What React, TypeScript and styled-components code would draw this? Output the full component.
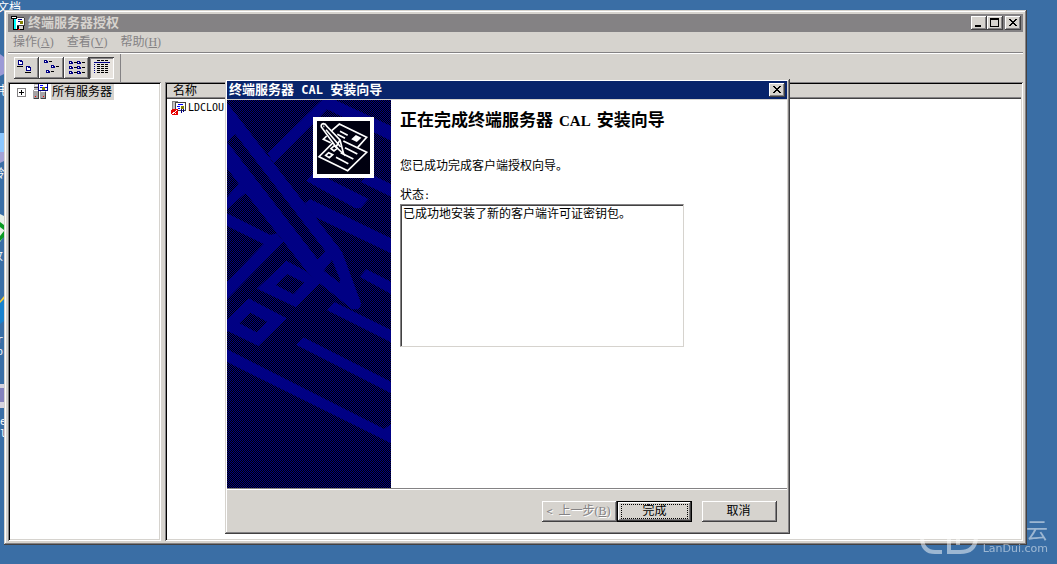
import React from "react";
import styled, { createGlobalStyle, css } from "styled-components";

const face = "#d6d3ce";
const grey = "#848284";
const dark = "#424142";
const navy = "#000084";
const cjk = '"DejaVu Sans Mono", "Noto Sans CJK SC", sans-serif';

const Global = createGlobalStyle`
  * { box-sizing: border-box; }
  body {
    margin: 0;
    background: #3a6ea5;
    color: #000;
    font-family: ${cjk};
    font-size: 12px;
    line-height: 16px;
  }
  button, textarea { font: inherit; color: inherit; }
`;

const raised = css`
  box-shadow: inset -1px -1px ${dark}, inset 1px 1px #fff, inset -2px -2px ${grey};
`;
const frame = css`
  box-shadow: inset -1px -1px ${dark}, inset 1px 1px ${face}, inset -2px -2px ${grey}, inset 2px 2px #fff;
`;

const Desktop = styled.div`
  position: relative;
  display: flex;
  min-height: 100vh;
  padding: 10px 30px 19px 4px;
  overflow: hidden;
`;

const DesktopLabel = styled.span<{ $x: number; $y: number }>`
  position: absolute;
  left: ${(p) => p.$x}px;
  top: ${(p) => p.$y}px;
  color: #fff;
  white-space: nowrap;
`;

const DesktopArt = styled.svg`
  position: absolute;
  left: 0;
  top: 0;
`;

const Latin = styled.span<{ $size?: number }>`
  font-size: ${(p) => p.$size ?? 10}px;
`;

const Key = styled.span`
  font-family: "Liberation Serif", serif;
  font-size: 12px;
`;

const HeadingLatin = styled.span`
  margin: 0 6px;
  font-family: "Liberation Serif", serif;
  font-size: 15px;
`;

const MainWindow = styled.main`
  position: relative;
  flex: 1;
  min-width: 0;
  display: flex;
  flex-direction: column;
  padding: 4px;
  background: ${face};
  ${frame}
`;

const TitleBar = styled.header<{ $active?: boolean }>`
  display: flex;
  align-items: center;
  height: 18px;
  padding: 0 2px;
  background: ${(p) => (p.$active ? "#08246b" : grey)};
  color: ${(p) => (p.$active ? "#fff" : face)};
`;

const Title = styled.h1`
  flex: 1;
  margin: 0;
  font-size: 13px;
  font-weight: 700;
  line-height: 18px;
  white-space: nowrap;
`;

const CaptionButton = styled.button<{ $apart?: boolean }>`
  width: 16px;
  height: 14px;
  margin-left: ${(p) => (p.$apart ? 2 : 0)}px;
  padding: 0;
  border: 0;
  background: ${face};
  ${raised}
  svg { display: block; }
`;

const MenuBar = styled.nav`
  display: flex;
  gap: 13px;
  height: 21px;
  padding: 2px 5px;
  border-bottom: 1px solid ${grey};
`;

const MenuItem = styled.button`
  padding: 0;
  border: 0;
  background: none;
  color: ${grey};
  line-height: 16px;
  white-space: nowrap;
`;

const ToolBar = styled.div`
  display: flex;
  height: 29px;
  border-top: 1px solid #fff;
`;

const ToolGroup = styled.div`
  display: flex;
  padding: 3px 6px;
  border-right: 1px solid ${grey};
`;

const ToolButton = styled.button<{ $pressed?: boolean }>`
  width: 25px;
  height: 22px;
  padding: 0;
  border: 0;
  background: ${(p) => (p.$pressed ? "#e7e3de" : face)};
  ${(p) =>
    p.$pressed
      ? css`box-shadow: inset 1px 1px ${dark}, inset -1px -1px #fff, inset 2px 2px ${grey};`
      : raised}
  svg { display: block; }
`;

const Panes = styled.div`
  flex: 1;
  display: grid;
  grid-template-columns: 153px minmax(0, 1fr);
  gap: 4px;
`;

const Pane = styled.section`
  padding: 2px;
  background: #fff;
  overflow: hidden;
  box-shadow: inset 1px 1px ${grey}, inset -1px -1px #fff, inset 2px 2px #000, inset -2px -2px ${face};
`;

const TreeItem = styled.div`
  display: flex;
  align-items: center;
  height: 16px;
  padding-left: 7px;
`;

const TreeIcon = styled.svg`
  margin: 0 3px 0 6px;
`;

const TreeLabel = styled.span`
  padding: 0 2px 0 1px;
  background: ${face};
`;

const ServerTable = styled.table`
  width: 100%;
  border-spacing: 0;
  th {
    height: 15px;
    padding: 0 6px;
    background: ${face};
    box-shadow: inset 0 -1px ${dark}, inset 0 -2px ${grey};
    font-weight: 400;
    line-height: 15px;
    text-align: left;
  }
  td { padding: 1px 4px; }
`;

const ServerName = styled.div`
  display: flex;
  align-items: center;
  gap: 1px;
`;

const Dialog = styled.div`
  position: absolute;
  left: 221px;
  top: 69px;
  width: 565px;
  padding: 2px 3px 2px 2px;
  background: ${face};
  ${frame}
`;

const DialogBody = styled.div`
  display: grid;
  grid-template-columns: 164px minmax(0, 1fr);
  margin-top: 1px;
  background: #fff;
  border-bottom: 1px solid ${grey};
`;

const SideArt = styled.svg`
  display: block;
`;

const DialogContent = styled.div`
  display: flex;
  flex-direction: column;
  align-items: flex-start;
  padding: 10px 9px;
`;

const Heading = styled.h2`
  margin: 0;
  font-size: 17px;
  font-weight: 700;
  line-height: 20px;
  white-space: nowrap;
`;

const Message = styled.p`
  margin: 27px 0 13px;
`;

const StatusBox = styled.textarea`
  width: 284px;
  height: 143px;
  padding: 1px 2px;
  border: 1px solid;
  border-color: ${grey} ${face} ${face} ${grey};
  background: #fff;
  box-shadow: inset 1px 1px ${dark};
  resize: none;
  outline: none;
`;

const Footer = styled.footer`
  display: flex;
  justify-content: flex-end;
  padding: 11px 10px 10px;
  border-top: 1px solid #fff;
`;

const PushButton = styled.button<{ $focus?: boolean; $apart?: boolean }>`
  width: 75px;
  height: 21px;
  margin-left: ${(p) => (p.$apart ? 10 : 0)}px;
  padding: 0 2px 0 0;
  border: ${(p) => (p.$focus ? "1px solid #000" : "0")};
  background: ${face};
  line-height: 19px;
  white-space: nowrap;
  ${raised}
  &:disabled { color: ${grey}; text-shadow: 1px 1px #fff; }
`;

const FocusRing = styled.span`
  display: block;
  margin: 0 1px 0 3px;
  border: 1px dotted #000;
  line-height: 13px;
`;

const Watermark = styled.div`
  position: absolute;
  right: 9px;
  bottom: 9px;
  display: flex;
  align-items: flex-end;
  gap: 5px;
  color: #fff;
  opacity: 0.5;
`;

const WatermarkText = styled.div`
  display: flex;
  flex-direction: column;
  align-items: flex-end;
  font-family: "DejaVu Sans", "Noto Sans CJK SC", sans-serif;
  font-size: 11px;
  line-height: 13px;
`;

const WatermarkName = styled.span`
  font-size: 22px;
  line-height: 22px;
`;

const CloseGlyph = () => (
  <svg width="16" height="14" shapeRendering="crispEdges">
    <path
      d="M4 3h2v1h1v1h2v-1h1v-1h2v1h-1v1h-1v1h-1v1h1v1h1v1h1v1h-2v-1h-1v-1h-2v1h-1v1h-2v-1h1v-1h1v-1h1v-1h-1v-1h-1v-1h-1z"
      fill="#000"
    />
  </svg>
);

const Page = ({ x, y }: { x: number; y: number }) => (
  <g>
    <path d={`M${x} ${y}h4v1h1v4h-5z`} fill={navy} />
    <path d={`M${x + 1} ${y + 1}h1v1h2v2h-3z`} fill="#fff" />
  </g>
);

const SmallIcon = ({ x, y }: { x: number; y: number }) => (
  <g>
    <path d={`M${x} ${y}h3v1h1v2h-4z`} fill={navy} />
    <path d={`M${x + 1} ${y + 1}h1v1h-1z`} fill="#fff" />
    <path d={`M${x + 5} ${y + 1}h3v1h-3z`} fill="#000" />
  </g>
);

const ServerIcon = () => (
  <TreeIcon width="16" height="16" shapeRendering="crispEdges">
    <path d="M2 0h5v6H2z" fill="#c6c3c6" />
    <path d="M1 6l1-1h4l1 1v9H1zM8 7l1-1h4l1 1v8H8z" fill="#a5a2a5" />
    <path d="M2 6h4v1H2zM9 7h4v1H9zM3 1h3v1H3z" fill="#fff" />
    <path d="M6 7h1v8H2v-1h4zM13 8h1v7H9v-1h4zM2 3h4v1H2z" fill={dark} />
    <path d="M6 0h10v7H6z" fill={navy} />
    <path d="M7 0h8v6H7z" fill="#fff" />
    <path d="M8 1h3v1H8zM8 3h2v1H8zM13 3h2v1h-2z" fill="#0000ff" />
    <path d="M10 3h3v3h-3z" fill="#848200" />
    <path d="M3 12h1v1H3zM11 12h1v1h-1z" fill="#f00" />
  </TreeIcon>
);

const AppIcon = () => (
  <svg width="18" height="18" shapeRendering="crispEdges">
    <path d="M1 2h6v3h1v11H3V5H1z" fill="#000" />
    <path d="M2 3h4v1H2zM6 5h1v10H6z" fill="#fff" />
    <path d="M4 5h2v10H4z" fill="#0ff" />
    <path d="M7 3h7v1h1v8H7z" fill={dark} />
    <path d="M7 4h7v7H7z" fill="#fff" />
    <path d="M8 5h4v1H8zM8 7h2v1H8z" fill={navy} />
    <path d="M10 7h3v3h-3z" fill="#848200" />
    <path d="M8 12h6v4H8z" fill="#000" />
    <path d="M9 12h4v3H9z" fill={face} />
    <path d="M8 15h2v1H8z" fill="#f00" />
  </svg>
);

const FailedServerIcon = () => (
  <svg width="16" height="16" shapeRendering="crispEdges">
    <path d="M1 1h6v13H1z" fill={grey} />
    <path d="M2 2h4v11H2z" fill="#c6c3c6" />
    <path d="M4 2h11v9H4z" fill={dark} />
    <path d="M5 3h9v7H5z" fill="#fff" />
    <path d="M7 4h5v1H7zM6 6h3v1H6zM7 8h2v1H7z" fill="#0000ff" />
    <path d="M10 6h3v3h-3z" fill="#848200" />
    <path d="M10 9h1v4h-1zM12 9h1v3h-1z" fill={navy} />
    <path d="M2 9h4l1 1v4l-1 1H2l-2-1v-4z" fill="#e70000" />
    <path d="M1 10h1v1h1v1h1v-1h1v-1h1v1H5v1H4v1h1v1H4v-1H3v1H1v-1h1v-1h1v-1H2z" fill="#fff" />
  </svg>
);

const WizardArt = () => (
  <SideArt width="164" height="388" viewBox="0 0 492 1164">
    <defs>
      <pattern id="dither" width="6" height="6" patternUnits="userSpaceOnUse">
        <rect width="6" height="6" fill={navy} />
        <path d="M0 0h3v3H0zM3 3h3v3H3z" fill="#000" shapeRendering="crispEdges" />
      </pattern>
    </defs>
    <rect width="492" height="1164" fill="url(#dither)" />
    <g fill={navy} fillRule="evenodd">
      <path d="M0 8L345 455L403 612L395 628H375L278 550L240 515L55 278L0 205ZM0 125L272 478L295 453L25 103ZM315 480L340 540L338 548L290 512Z" />
      <path d="M122 160L285 0H325L492 78V122L300 28L140 190Z" />
      <path d="M0 292L40 245L60 275L0 328Z" />
      <path d="M0 340L130 405L150 400L170 425L0 598V545L110 432L0 378Z" />
      <path d="M237 242L262 215L425 297L400 325H385Z" />
      <path d="M400 245L430 222L492 252V290Z" />
      <path d="M232 310L250 298L492 415V460L262 350Z" />
      <path d="M398 530L418 508L492 545V582Z" />
      <path d="M178 482L240 515L278 550L207 622L90 566ZM182 523L146 555L200 583L232 548Z" />
      <path d="M65 595L179 655L94 738L0 692V660ZM70 638L37 670L89 697L120 665Z" />
      <path d="M299 630L322 606L492 690V727Z" />
      <path d="M207 734L229 712L492 845V880Z" />
      <path d="M0 748L472 987L492 972V1030L0 786Z" />
    </g>
    <rect x="258" y="51" width="183" height="183" fill="#fff" />
    <rect x="270" y="63" width="159" height="159" fill="#000010" />
    <g transform="translate(219 15)" fill="none" stroke="#fff" strokeWidth="5">
      <path d="M95 77L118 57L200 97L173 127M80 93L70 103L92 113" />
      <path d="M100 112L57 155L143 197L200 142L130 108" />
      <path d="M64 66Q62 57 70 56Q77 56 80 63L120 105L131 147L108 126Z" fill="#000010" />
      <path d="M78 74L122 126M70 64h3M108 126L120 105" />
      <path d="M120 79L143 91M112 88L135 100M135 128L172 147M122 143L160 162M108 157L145 176" />
      <path d="M86 143L98 149L88 158L77 151ZM103 122L112 130L102 138L93 131Z" />
      <path d="M168 93L180 99L170 108L158 102Z" fill="#fff" />
    </g>
  </SideArt>
);

export default function App() {
  return (
    <Desktop>
      <Global />
      <DesktopArt width="30" height="564">
        <path d="M0 54l4 3v17l-4 2z" fill="#9c9ad6" />
        <path d="M0 133h4v19H0z" fill="#8cc7ff" />
        <path d="M0 152h4v9l-4 2z" fill="#a5a2d6" />
        <path d="M0 214l4 2v20l-4 6z" fill="#e7efe7" />
        <path d="M0 222l4 3v5l-4-3zM0 236l4-5v6l-4 4z" fill="#089a21" />
        <path d="M0 302l4-3v22l-4 3z" fill="#1882ce" />
        <path d="M0 301l4-5v3l-4 4z" fill="#ffcf31" />
        <path d="M0 384h4v24H0z" fill="#8482bd" />
        <path d="M0 384h4v4H0zM0 402h4v6H0z" fill="#d6d3de" />
      </DesktopArt>
      <DesktopLabel $x={-3} $y={0}>文档</DesktopLabel>
      <DesktopLabel $x={-3} $y={83}>电</DesktopLabel>
      <DesktopLabel $x={-3} $y={166}>邻</DesktopLabel>
      <DesktopLabel $x={-9} $y={248}>收</DesktopLabel>
      <DesktopLabel $x={-3} $y={331}><Latin>r</Latin></DesktopLabel>
      <DesktopLabel $x={-3} $y={343}><Latin>o</Latin></DesktopLabel>
      <DesktopLabel $x={0} $y={413}><Latin>e</Latin></DesktopLabel>
      <DesktopLabel $x={0} $y={425}><Latin>l</Latin></DesktopLabel>

      <MainWindow>
        <TitleBar>
          <AppIcon />
          <Title>终端服务器授权</Title>
          <CaptionButton aria-label="最小化">
            <svg width="16" height="14" shapeRendering="crispEdges"><path d="M4 9h6v2H4z" /></svg>
          </CaptionButton>
          <CaptionButton aria-label="最大化">
            <svg width="16" height="14" shapeRendering="crispEdges">
              <path d="M3 2h9v9H3zM4 4v6h7V4z" fillRule="evenodd" />
            </svg>
          </CaptionButton>
          <CaptionButton aria-label="关闭" $apart><CloseGlyph /></CaptionButton>
        </TitleBar>
        <MenuBar>
          <MenuItem>操作<Key>(<u>A</u>)</Key></MenuItem>
          <MenuItem>查看<Key>(<u>V</u>)</Key></MenuItem>
          <MenuItem>帮助<Key>(<u>H</u>)</Key></MenuItem>
        </MenuBar>
        <ToolBar>
          <ToolGroup>
            <ToolButton aria-label="大图标">
              <svg width="25" height="22" shapeRendering="crispEdges">
                <Page x={4} y={3} /><Page x={12} y={9} />
                <path d="M3 9h6v1H3zM11 15h6v1h-6z" fill="#000" />
              </svg>
            </ToolButton>
            <ToolButton aria-label="小图标">
              <svg width="25" height="22" shapeRendering="crispEdges">
                <SmallIcon x={5} y={3} /><SmallIcon x={12} y={8} /><SmallIcon x={7} y={13} />
              </svg>
            </ToolButton>
            <ToolButton aria-label="列表">
              <svg width="25" height="22" shapeRendering="crispEdges">
                {[4, 9, 14].map((y) => (
                  <g key={y}><SmallIcon x={5} y={y} /><SmallIcon x={13} y={y} /></g>
                ))}
              </svg>
            </ToolButton>
            <ToolButton aria-label="详细信息" $pressed>
              <svg width="25" height="22" shapeRendering="crispEdges">
                <path d="M8 3.5h12" stroke="#000" strokeDasharray="3 1" />
                <path d="M5 5.5h16" stroke={navy} />
                <path d="M5.5 7v10" stroke={navy} strokeDasharray="1 1" />
                <path d="M8 7.5h12M8 9.5h12M8 11.5h12M8 13.5h12M8 15.5h12" stroke="#000" strokeDasharray="3 1" />
              </svg>
            </ToolButton>
          </ToolGroup>
        </ToolBar>
        <Panes>
          <Pane>
            <TreeItem>
              <svg width="9" height="9" shapeRendering="crispEdges">
                <rect x="0.5" y="0.5" width="8" height="8" fill="#fff" stroke={grey} />
                <path d="M2 4.5h5M4.5 2v5" stroke="#000" />
              </svg>
              <ServerIcon />
              <TreeLabel>所有服务器</TreeLabel>
            </TreeItem>
          </Pane>
          <Pane>
            <ServerTable>
              <thead><tr><th scope="col">名称</th></tr></thead>
              <tbody>
                <tr>
                  <td><ServerName><FailedServerIcon /><Latin>LDCLOU</Latin></ServerName></td>
                </tr>
              </tbody>
            </ServerTable>
          </Pane>
        </Panes>

        <Dialog role="dialog" aria-labelledby="wizard-title">
          <TitleBar $active>
            <Title id="wizard-title">终端服务器<Latin $size={12}> CAL </Latin>安装向导</Title>
            <CaptionButton aria-label="关闭"><CloseGlyph /></CaptionButton>
          </TitleBar>
          <DialogBody>
            <WizardArt />
            <DialogContent>
              <Heading>正在完成终端服务器<HeadingLatin>CAL</HeadingLatin>安装向导</Heading>
              <Message>您已成功完成客户端授权向导。</Message>
              <label htmlFor="status">状态<Latin>:</Latin></label>
              <StatusBox id="status" readOnly value="已成功地安装了新的客户端许可证密钥包。" />
            </DialogContent>
          </DialogBody>
          <Footer>
            <PushButton disabled><Latin>&lt; </Latin>上一步<Key>(<u>B</u>)</Key></PushButton>
            <PushButton $focus><FocusRing>完成</FocusRing></PushButton>
            <PushButton $apart>取消</PushButton>
          </Footer>
        </Dialog>
      </MainWindow>

      <Watermark>
        <svg width="58" height="34" fill="none" stroke="#fff" strokeWidth="4">
          <path d="M22 31H15Q3 31 2 18M29 18V31H40Q55 31 56 17M38 18V24" />
        </svg>
        <WatermarkText>
          <WatermarkName>云</WatermarkName>
          LanDui.com
        </WatermarkText>
      </Watermark>
    </Desktop>
  );
}
